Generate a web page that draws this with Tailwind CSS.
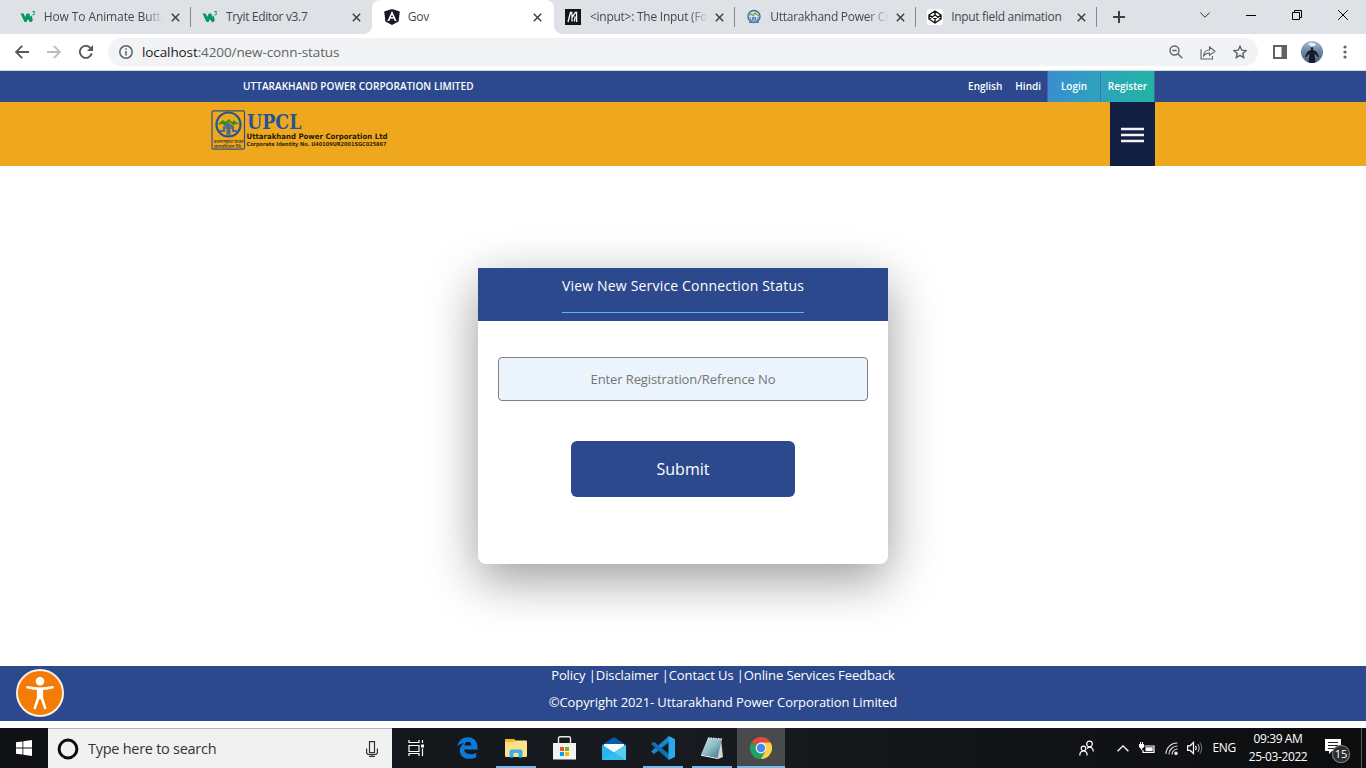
<!DOCTYPE html>
<html lang="en">
<head>
<meta charset="utf-8">
<title>Gov</title>
<script src="https://cdn.jsdelivr.net/npm/@tailwindcss/browser@4"></script>
</head>
<body class="w-[1366px] h-[768px] overflow-hidden flex flex-col bg-white font-['Open_Sans',sans-serif]">

<!-- Tab strip -->
<div class="h-[34px] shrink-0 bg-[#dee1e6] flex items-center text-[12px] tracking-[-0.25px] text-[#45494d]">
  <div class="flex items-center pl-[9.7px]">
    <div class="w-[181.3px] h-[34px] flex items-center pl-[10px] relative">
      <svg class="w-4 h-4 shrink-0" viewBox="0 0 16 16"><path d="M.5 4.500h3.200l1.500 3.500 1.500-3.500h2.600l1.200 3.500 1.300-1.600 1 5-1.700 1.800-1.600-.4-1.500-2.800-1.400 3H4.500z" fill="#059862"/><path d="M12.300 2.500h2.500l-1.200 1.500c1.500.2 1.200 2-.2 2-.6 0-1-.2-1.200-.6" fill="none" stroke="#059862" stroke-width=".9"/></svg>
      <span class="ml-2 w-[119px] overflow-hidden whitespace-nowrap tracking-[-0.1px] [mask-image:linear-gradient(to_right,black_85%,transparent)]">How To Animate Buttons</span>
      <svg class="w-[9px] h-[9px] ml-2 shrink-0" viewBox="0 0 9 9"><path d="M.8.8l7.400 7.400M8.200.8L.8 8.200" stroke="#3c4043" stroke-width="1.500"/></svg>
      <div class="absolute right-0 top-[7px] w-px h-5 bg-[#85888c]"></div>
    </div>
    <div class="w-[181.3px] h-[34px] flex items-center pl-[11px]">
      <svg class="w-4 h-4 shrink-0" viewBox="0 0 16 16"><path d="M.5 4.500h3.200l1.500 3.500 1.500-3.500h2.600l1.200 3.500 1.300-1.600 1 5-1.700 1.800-1.600-.4-1.500-2.800-1.400 3H4.500z" fill="#059862"/><path d="M12.300 2.500h2.500l-1.200 1.500c1.500.2 1.200 2-.2 2-.6 0-1-.2-1.200-.6" fill="none" stroke="#059862" stroke-width=".9"/></svg>
      <span class="ml-2 w-[118px] whitespace-nowrap tracking-[-0.35px]">Tryit Editor v3.7</span>
      <svg class="w-[9px] h-[9px] ml-2 shrink-0" viewBox="0 0 9 9"><path d="M.8.8l7.400 7.400M8.200.8L.8 8.200" stroke="#3c4043" stroke-width="1.500"/></svg>
    </div>
    <div class="w-[181.3px] h-[34px] flex items-center pl-[11.500px] relative bg-white rounded-t-lg">
      <div class="absolute -left-2 bottom-0 w-2 h-2 bg-[radial-gradient(circle_at_0_0,transparent_7.5px,white_8px)]"></div>
      <div class="absolute -right-2 bottom-0 w-2 h-2 bg-[radial-gradient(circle_at_100%_0,transparent_7.5px,white_8px)]"></div>
      <svg class="w-4 h-4 shrink-0" viewBox="0 0 16 16"><path d="M8 0l7.800 2.600-1.200 10L8 16l-6.600-3.400-1.200-10z" fill="#151a26"/><path d="M8 2L3.400 12h1.900l.9-2.300h3.600l.9 2.300h1.900zm0 3.700l1.200 2.600H6.800z" fill="#fff"/></svg>
      <span class="ml-2 w-[118px] whitespace-nowrap">Gov</span>
      <svg class="w-[9px] h-[9px] ml-[7.500px] shrink-0" viewBox="0 0 9 9"><path d="M.8.8l7.400 7.400M8.200.8L.8 8.200" stroke="#3c4043" stroke-width="1.500"/></svg>
    </div>
    <div class="w-[181.3px] h-[34px] flex items-center pl-[11.300px] relative">
      <svg class="w-4 h-4 shrink-0" viewBox="0 0 16 16"><rect width="16" height="16" fill="#15141a"/><path d="M3 13L5.500 3.500h1.200l.5 5 3.100-5h1.200L11.700 13M7 12.500V8M9.300 12.500l1-5" stroke="#fff" stroke-width="1.300" fill="none"/></svg>
      <span class="ml-[9px] w-[118px] overflow-hidden whitespace-nowrap [mask-image:linear-gradient(to_right,black_85%,transparent)]">&lt;input&gt;: The Input (Form</span>
      <svg class="w-[9px] h-[9px] ml-[7px] shrink-0" viewBox="0 0 9 9"><path d="M.8.8l7.400 7.400M8.200.8L.8 8.200" stroke="#3c4043" stroke-width="1.500"/></svg>
      <div class="absolute right-0 top-[7px] w-px h-5 bg-[#85888c]"></div>
    </div>
    <div class="w-[181.3px] h-[34px] flex items-center pl-[11.300px] relative">
      <svg class="w-4 h-4 shrink-0" viewBox="0 0 16 16" fill="none"><circle cx="8" cy="7.500" r="6" stroke="#39699c" stroke-width="1.300"/><path d="M2 7l3-2 2 1.500L9 4l4.500 3.500" stroke="#6fae4f" stroke-width="1.400"/><path d="M4 8v3h2.500V8.500h3V11H12V8M7 9v4M9 9v4M3 13.500h10" stroke="#4b7fb3" stroke-width="1"/></svg>
      <span class="ml-[8px] w-[119px] overflow-hidden whitespace-nowrap [mask-image:linear-gradient(to_right,black_82%,transparent)]">Uttarakhand Power Corp</span>
      <svg class="w-[9px] h-[9px] ml-[7px] shrink-0" viewBox="0 0 9 9"><path d="M.8.8l7.400 7.400M8.200.8L.8 8.200" stroke="#3c4043" stroke-width="1.500"/></svg>
      <div class="absolute right-0 top-[7px] w-px h-5 bg-[#85888c]"></div>
    </div>
    <div class="w-[181.3px] h-[34px] flex items-center pl-[11px] relative">
      <svg class="w-4 h-4 shrink-0" viewBox="0 0 16 16"><rect width="16" height="16" rx="1.500" fill="#fff"/><path d="M8 2l6 4v4l-6 4-6-4V6zM8 2v4M8 10v4M2 6l6 4 6-4M2 10l6-4 6 4" stroke="#111" stroke-width="1.400" fill="none" stroke-linejoin="round"/></svg>
      <span class="ml-[8px] w-[118px] whitespace-nowrap tracking-[-0.31px]">Input field animation</span>
      <svg class="w-[9px] h-[9px] ml-[8px] shrink-0" viewBox="0 0 9 9"><path d="M.8.8l7.400 7.400M8.200.8L.8 8.200" stroke="#3c4043" stroke-width="1.500"/></svg>
      <div class="absolute right-[0.5px] top-[7px] w-px h-5 bg-[#85888c]"></div>
    </div>
  </div>
  <svg class="w-3 h-3 ml-[15.500px]" viewBox="0 0 12 12"><path d="M6 0v12M0 6h12" stroke="#3c4043" stroke-width="2"/></svg>
  <div class="ml-auto flex items-center gap-[36px] pr-[18px] pb-[5px]">
    <svg class="w-[10px] h-[10px]" viewBox="0 0 10 10"><path d="M.3 2.500L5 7.200l4.700-4.700" stroke="#333" fill="none"/></svg>
    <svg class="w-[10px] h-[10px]" viewBox="0 0 10 10"><path d="M0 5.500h10" stroke="#000"/></svg>
    <svg class="w-[10px] h-[10px]" viewBox="0 0 10 10"><path d="M.5 2.500h7v7h-7zM2.500 2.500v-2h7v7h-2" stroke="#000" fill="none"/></svg>
    <svg class="w-[10px] h-[10px]" viewBox="0 0 10 10"><path d="M.2.2l9.600 9.600M9.800.2L.2 9.800" stroke="#000"/></svg>
  </div>
</div>

<!-- Toolbar -->
<div class="h-[37px] shrink-0 bg-white border-b border-[#d5d8dc] flex items-center pl-[15px] pr-[15px]">
  <svg class="w-[14px] h-[14px]" viewBox="0 0 14 14"><path d="M14 7H1.200M7.200.8L1 7l6.200 6.200" stroke="#54585c" stroke-width="1.800" fill="none"/></svg>
  <svg class="w-[14px] h-[14px] ml-[18px]" viewBox="0 0 14 14"><path d="M0 7h12.800M6.800.8L13 7l-6.200 6.200" stroke="#bbbdbf" stroke-width="1.800" fill="none"/></svg>
  <svg class="w-[14px] h-[14px] ml-[18px]" viewBox="0 0 14 14"><path d="M12.700 8.300A6 6 0 1 1 11.300 2.800" stroke="#54585c" stroke-width="1.900" fill="none"/><path d="M14 0v6H8z" fill="#54585c"/></svg>
  <div class="ml-[15px] w-[1150px] h-7 rounded-full bg-[#f1f3f4] flex items-center pl-[11px] pr-[11px]">
    <svg class="w-[14px] h-[14px]" viewBox="0 0 14 14"><circle cx="7" cy="7" r="6.200" stroke="#5f6368" stroke-width="1.500" fill="none"/><path d="M7 3.200v1.600M7 6v4.500" stroke="#5f6368" stroke-width="1.500"/></svg>
    <span class="ml-[9px] text-[13.500px] tracking-[-0.1px] text-[#5f6368] whitespace-nowrap"><span class="text-[#202124]">localhost</span>:4200/new-conn-status</span>
    <svg class="w-[14px] h-[14px] ml-auto" viewBox="0 0 14 14" fill="none" stroke="#5f6368" stroke-width="1.400"><circle cx="5.500" cy="5.500" r="4.500"/><path d="M9 9l4.300 4.300M3.300 5.500h4.400"/></svg>
    <svg class="w-[16px] h-[15px] ml-[17px]" viewBox="0 0 16 15" fill="none" stroke="#5f6368" stroke-width="1.100"><path d="M1 4v10h11.500v-3M3.500 11c.3-4 2.500-6 6-6V2L15 6.300 9.500 10.500V8c-3 0-4.500 1-6 3z"/></svg>
    <svg class="w-[14px] h-[14px] ml-[17px]" viewBox="0 0 14 14" fill="none" stroke="#5f6368" stroke-width="1.400"><path d="M7 1.300l1.700 3.900 4.300.4-3.200 2.800.9 4.200L7 10.400l-3.700 2.200.9-4.200L1 5.600l4.300-.4z"/></svg>
  </div>
  <svg class="w-[14px] h-[14px] ml-[15px]" viewBox="0 0 14 14"><path d="M0 0h14v14H0zM2 2v10h6.500V2z" fill="#5f6368" fill-rule="evenodd"/></svg>
  <svg class="w-[22px] h-[22px] ml-[14px]" viewBox="0 0 22 22"><defs><linearGradient id="sky" x1="0" y1="0" x2="0" y2="1"><stop offset="0" stop-color="#a9bbcf"/><stop offset=".45" stop-color="#7188a6"/><stop offset="1" stop-color="#4a5c78"/></linearGradient><clipPath id="avatar"><circle cx="11" cy="11" r="11"/></clipPath></defs><g clip-path="url(#avatar)"><rect width="22" height="22" fill="url(#sky)"/><path d="M7 3l3-1.500 5 1.500-1 2-4 .5z" fill="#e6edf4"/><circle cx="11" cy="7.600" r="1.300" fill="#141b27"/><path d="M9.500 9h3l3 1.800 2.500 4.700-.8.700-3.700-3.700 1 9.500h-7l1-9.500-3.700 3.700-.8-.7 2.500-4.700z" fill="#141b27"/></g></svg>
  <svg class="w-1 h-4 ml-auto mr-[4.500px]" viewBox="0 0 4 16" fill="#5f6368"><circle cx="2" cy="3" r="1.600"/><circle cx="2" cy="8" r="1.600"/><circle cx="2" cy="13" r="1.600"/></svg>
</div>

<!-- Site top bar -->
<div class="h-[31px] shrink-0 bg-[#2c498d] text-white text-[10px] font-semibold flex items-center whitespace-nowrap">
  <span class="ml-[243px] w-[232px] tracking-[0.055px]">UTTARAKHAND POWER CORPORATION LIMITED</span>
  <span class="ml-auto">English</span>
  <span class="ml-[13px]">Hindi</span>
  <div class="ml-[6px] w-[108px] h-full flex mr-[211px] border-x border-[#4463a8] bg-linear-to-r from-[#3a8ecf] to-[#1fb5a4]">
    <span class="w-[53px] h-full flex items-center justify-center border-r border-[#4771aa]">Login</span>
    <span class="w-[53px] h-full flex items-center justify-center">Register</span>
  </div>
</div>

<!-- Brand bar -->
<div class="h-16 shrink-0 bg-[#efa81d] flex justify-between pl-[211px] pr-[211px]">
  <div class="flex pt-2">
    <svg class="w-[35px] h-10" viewBox="0 0 35 40"><rect x="1" y=".8" width="32.500" height="38.400" rx="1.500" fill="none" stroke="#35537a" stroke-width="1.200"/><circle cx="17.500" cy="14.500" r="12" fill="none" stroke="#265493" stroke-width="2.200"/><path d="M6.500 14.500l5.500-4.500 2.500 2L18 9l3 3 2-1.500 5.500 4-4-.5-2 1.500-4-3.500-4 3.500-3-1.500z" fill="#319018"/><path d="M8.500 21h4.500v-4l3.500-2.500v11M26.500 21H22v-4l-3.500-2.500v11" fill="none" stroke="#51698a" stroke-width="2"/><path d="M12 18h11" stroke="#53677f" stroke-width="1.500"/><text x="2.500" y="32.500" font-size="5" font-weight="700" font-family="Noto Sans, sans-serif" fill="#5b4a28" textLength="30" lengthAdjust="spacingAndGlyphs">उत्तराखण्ड पावर</text><text x="3" y="37.800" font-size="5" font-weight="700" font-family="Noto Sans, sans-serif" fill="#5b4a28" textLength="28" lengthAdjust="spacingAndGlyphs">कारपोरेशन लि.</text></svg>
    <svg class="w-[144px] h-10" viewBox="0 0 144 40"><text x="1" y="19.300" font-size="20" font-weight="700" font-family="DejaVu Serif, serif" fill="#24539a" textLength="54.500" lengthAdjust="spacingAndGlyphs">UPCL</text><text x="0.500" y="29.300" font-size="7.500" font-weight="700" font-family="DejaVu Sans, sans-serif" fill="#241c08" textLength="141" lengthAdjust="spacingAndGlyphs">Uttarakhand Power Corporation Ltd</text><text x="0.500" y="36.300" font-size="5.500" font-weight="700" font-family="DejaVu Sans, sans-serif" fill="#33260a" textLength="140" lengthAdjust="spacingAndGlyphs">Corporate Identity No. U40109UR2001SGC025867</text></svg>
  </div>
  <div class="w-[45px] bg-[#111f43] flex items-center justify-center">
    <svg class="w-[23px] h-4 mt-px" viewBox="0 0 23 16"><path d="M0 2h23M0 8h23M0 14h23" stroke="#f6f1f4" stroke-width="2.300"/></svg>
  </div>
</div>

<!-- Status form -->
<main class="h-[500px] shrink-0 flex justify-center items-center">
  <div class="w-[410px] h-[296px] bg-white rounded-b-lg shadow-[0_15px_50px_rgba(0,0,0,0.4)] flex flex-col items-center">
    <div class="w-full h-[53px] bg-[#2c498d] flex justify-center shrink-0">
      <h1 class="h-[45px] pt-2 border-b border-[#58b8ea] text-white text-[14px] leading-5 font-medium whitespace-nowrap tracking-[0.18px]">View New Service Connection Status</h1>
    </div>
    <input class="mt-9 w-[370px] h-11 shrink-0 rounded-[4px] border border-[#808080] bg-[#ebf4fc] text-center text-[13px] tracking-[-0.11px] placeholder:text-[#757575]" placeholder="Enter Registration/Refrence No">
    <button class="mt-10 w-[224px] h-14 shrink-0 rounded-md bg-[#2c498d] text-white text-[16px] font-medium">Submit</button>
  </div>
</main>

<!-- Footer -->
<footer class="h-[55px] mb-[7px] shrink-0 bg-[#2c498d] text-white text-[13px] font-medium relative flex flex-col items-center whitespace-nowrap pl-[80px] tracking-[-0.1px]">
  <div class="h-[19px] leading-[19px]">Policy |Disclaimer |Contact Us |Online Services Feedback</div>
  <div class="h-[19px] mt-2 leading-[19px]">©Copyright 2021- Uttarakhand Power Corporation Limited</div>
  <svg class="absolute left-4 top-[3px] w-12 h-12" viewBox="0 0 48 48"><circle cx="24" cy="24" r="23" fill="#f47b06" stroke="#fff0e3" stroke-width="2"/><circle cx="24" cy="12.200" r="4.300" fill="#fff"/><path d="M11.500 18.300c8 1.900 17 1.900 25 0M24 20v9M22.200 20.500v8.500L18.800 39M25.800 20.500v8.500L29.200 39" fill="none" stroke="#fff" stroke-width="2.600" stroke-linecap="round" stroke-linejoin="round"/><path d="M21 19h6v9h-6z" fill="#fff"/></svg>
</footer>

<!-- Windows taskbar -->
<div class="h-10 shrink-0 flex text-white bg-linear-to-r from-[#0f1114] via-[#171b1f] to-[#0c0d0f]">
  <div class="w-12 flex items-center justify-center"><svg class="w-4 h-4" viewBox="0 0 16 16" fill="#fff"><path d="M0 2.300l6.500-.9v6.100H0zM7.300 1.300L16 0v7.500H7.300zM0 8.400h6.500v6.200L0 13.700zM7.300 8.400H16V16l-8.700-1.200z"/></svg></div>
  <div class="w-[344px] bg-[#f1f1f1] border-t border-[#b5b5b5] flex items-center pl-[9px] pr-[14px]">
    <svg class="w-[22px] h-[22px]" viewBox="0 0 22 22"><circle cx="11" cy="11" r="8.900" fill="none" stroke="#0a0a0a" stroke-width="3"/></svg>
    <span class="ml-[9px] text-[14.500px] tracking-[-0.27px] text-[#333] whitespace-nowrap">Type here to search</span>
    <svg class="w-3 h-4 ml-auto" viewBox="0 0 12 16" fill="none" stroke="#333" stroke-width="1.200"><path d="M3.500.6h5v11h-5zM.6 7.500v3.500q0 2.500 2.500 2.500h5.800q2.500 0 2.500-2.500V7.500M6 13.500v2M3 15.400h6"/></svg>
  </div>
  <div class="w-12 mr-[3px] flex items-center justify-center"><svg class="w-[17px] h-4" viewBox="0 0 17 16" fill="none" stroke="#fff" stroke-width="1.200"><path d="M1 0v2.500h10V0M1 5.500h10v6H1zM1 16v-2.500h10V16M14.500 0v3M14.500 8.500V16"/><path d="M13 4.500h3v3h-3z" fill="#fff" stroke="none"/></svg></div>
  <div class="flex gap-px">
    <div class="w-12 flex items-center justify-center"><svg class="w-[21px] h-[22px]" viewBox="0 0 21 22"><path d="M.3 9.500C1.500 3.500 5.800.3 11 .3c6 0 9.500 4.200 9.500 9.800v2.400H7.200c.2 3 3 4.700 6.200 4.700 2.200 0 4-.5 5.700-1.500v4.500c-2 1.100-4.300 1.600-7 1.600-5.800 0-9.300-3.500-9.300-8.300 0-3.300 1.700-5.900 4.800-7.300C3.800 6.200 1.600 7.500.3 9.500zM7.400 8.600h6.900c0-2.300-1.100-3.800-3.300-3.800-1.900 0-3.200 1.500-3.600 3.800z" fill="#0a7ad8"/></svg></div>
    <div class="w-12 flex items-center justify-center relative"><svg class="w-[22px] h-[19px]" viewBox="0 0 22 19"><path d="M0 1q0-1 1-1h8l1 1.500h11q1 0 1 1V17q0 1-1 1H1q-1 0-1-1z" fill="#fce08a"/><path d="M0 3V1q0-1 1-1h8l1.500 1.500L8.500 3z" fill="#f5b921"/><path d="M4.500 18.500v-6q0-2 2-2h9q2 0 2 2v6h-4V14h-5v4.500z" fill="#38b1e8"/></svg><div class="absolute bottom-0 left-1 w-10 h-[2px] bg-[#76b9ed]"></div></div>
    <div class="w-12 flex items-center justify-center"><svg class="w-[23px] h-6 -ml-[2px]" viewBox="0 0 23 24"><path d="M0 7h23v16.500H0z" fill="#f2f2f2"/><path d="M5.500 8V2.500Q5.500.8 7 .8h9q1.500 0 1.500 1.700V8" fill="none" stroke="#e8e8e8" stroke-width="1.400"/><path d="M7 11h4v4H7z" fill="#f25022"/><path d="M12 11h4v4h-4z" fill="#7fba00"/><path d="M7 16h4v4H7z" fill="#00a4ef"/><path d="M12 16h4v4h-4z" fill="#ffb900"/></svg></div>
    <div class="w-12 flex items-center justify-center"><svg class="w-6 h-[23px]" viewBox="0 0 24 23"><path d="M0 8l12-8 12 8v4H0z" fill="#075bab"/><path d="M2 7h20v8H2z" fill="#f7fafb"/><path d="M0 7.500l12 8 12-8V23H0z" fill="#29b5f0"/><path d="M24 8v15H0l12-7.500z" fill="#54cdf5"/><path d="M0 23l12-7.500L24 23z" fill="#35bdf0"/></svg></div>
    <div class="w-12 flex items-center justify-center relative"><svg class="w-6 h-6" viewBox="0 0 24 24"><path d="M18 0v6L3 18 0 15.500z" fill="#1688ce"/><path d="M0 8l3-2.300L18 18v6z" fill="#0c72b5"/><path d="M17.500 0L24 3v18l-6.500 3z" fill="#29a8ee"/></svg><div class="absolute bottom-0 left-1 w-10 h-[2px] bg-[#76b9ed]"></div></div>
    <div class="w-12 flex items-center justify-center relative"><svg class="w-[24px] h-[22px]" viewBox="0 0 24 22"><defs><linearGradient id="note" x1="0" y1="0" x2="1" y2="1"><stop offset="0" stop-color="#c9e8ea"/><stop offset=".5" stop-color="#8dbbc4"/><stop offset="1" stop-color="#30717e"/></linearGradient></defs><path d="M21 2l2 18-5 2-2-1z" fill="#d9d6cf"/><path d="M8 1l14 1-4.500 19L1 17.500z" fill="url(#note)"/><path d="M1 17.500L17.500 21v1L1 18.800z" fill="#f3f3f3"/><path d="M8 1l14 1" stroke="#e5e5e5" stroke-width="1.500" stroke-dasharray="1.500 1"/></svg><div class="absolute bottom-0 left-1 w-10 h-[2px] bg-[#76b9ed]"></div></div>
    <div class="w-12 flex items-center justify-center relative bg-[#484a4c]"><svg class="w-[22px] h-[22px]" viewBox="0 0 22 22"><path d="M11 11L1.470 5.500A11 11 0 0 1 20.530 5.500z" fill="#dd4b3e"/><path d="M11 11V5.500h9.530A11 11 0 0 1 11 22z" fill="#fdd04a"/><path d="M1.470 5.500A11 11 0 0 0 11 22l4.760-8.250L11 11z" fill="#1ea363"/><circle cx="11" cy="11" r="5.400" fill="#f4f4f4"/><circle cx="11" cy="11" r="4.200" fill="#4688f1"/></svg><div class="absolute bottom-0 left-0 w-12 h-[2px] bg-[#76b9ed]"></div></div>
  </div>
  <div class="ml-auto flex items-center">
    <svg class="w-[15px] h-4" viewBox="0 0 15 16" fill="none" stroke="#fff" stroke-width="1.200"><circle cx="10.500" cy="4" r="2.800"/><circle cx="4.500" cy="8.500" r="2.300"/><path d="M.8 15.500c0-6 7.400-6 7.400 0M8 8.500c3-3 6.300-.5 6.300 3"/></svg>
    <svg class="w-3 h-[7px] ml-[23px]" viewBox="0 0 12 7"><path d="M.6 6.300L6 .9l5.400 5.400" fill="none" stroke="#fff" stroke-width="1.300"/></svg>
    <svg class="w-4 h-[13px] ml-[10px]" viewBox="0 0 16 13"><path d="M5.500 4h9.500v6.500H4V8" fill="none" stroke="#fff" stroke-width="1.200"/><path d="M6.500 5.300h7.200v4H6.500zM0 2h5v3L3.500 6.500h-2L0 5zM1 0h1v2H1zM3 0h1v2H3zM2 6h1v2H2z" fill="#fff"/></svg>
    <svg class="w-[13px] h-[13px] ml-[10px]" viewBox="0 0 13 13" fill="none" stroke="#ddd" stroke-width="1.100"><path d="M1 12A11 11 0 0 1 12.500 1M4 12.500A8.500 8.500 0 0 1 12.500 4M7 12.500A5.500 5.500 0 0 1 12.500 7"/><circle cx="11" cy="11.300" r="1.200" fill="#fff"/></svg>
    <svg class="w-4 h-[14px] ml-[9px]" viewBox="0 0 16 14" fill="none" stroke="#fff" stroke-width="1.200"><path d="M.6 4.800h2.500L6.500 1.500v11L3.100 9.300H.6z"/><path d="M8.500 4.800q1.600 2.200 0 4.400"/><path d="M10.800 3q2.700 4 0 8" stroke="#aaa"/><path d="M13 1.500q3.500 5.500 0 11" stroke="#666"/></svg>
    <span class="ml-[10px] w-[24px] text-[12px] tracking-[-0.3px]">ENG</span>
    <div class="ml-[8.500px] w-[66px] text-center text-[12px] leading-[18px] tracking-[-0.4px] whitespace-nowrap">09:39 AM<br>25-03-2022</div>
    <div class="relative ml-[14px] w-[26px] h-6 mt-[5px]">
      <svg class="w-[26px] h-6" viewBox="0 0 26 24"><path d="M0 0h16v12H7l-3 3v-3H0z" fill="#fff"/><path d="M3 3.500h10M3 6.500h10M3 9.500h7" stroke="#222"/><circle cx="16" cy="15" r="8.600" fill="#2c2d2f" stroke="#77797b" stroke-width="1.200"/></svg>
      <span class="absolute left-[8px] top-[7px] w-4 text-center text-[11px] leading-4">15</span>
    </div>
    <div class="ml-[10px] w-px h-10 bg-[#5b5d60] mr-1"></div>
  </div>
</div>
</body>
</html>
